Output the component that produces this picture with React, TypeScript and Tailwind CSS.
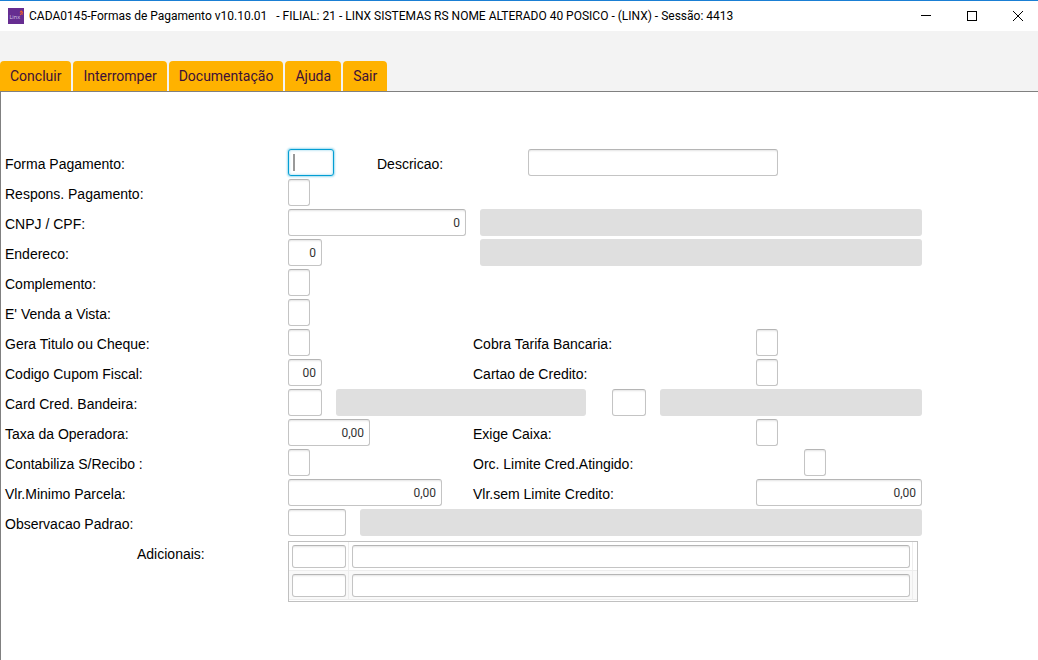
import React from "react";
import clsx from "clsx";

interface FieldProps {
    id: string;
    className: string;
    label?: string;
    value?: string;
}

interface LabelProps {
    htmlFor: string;
    className?: string;
    children: React.ReactNode;
}

const menuItems = ["Concluir", "Interromper", "Documentação", "Ajuda", "Sair"];

const Label: React.FC<LabelProps> = ({ htmlFor, className = "w-[283px]", children }) => (
    <label htmlFor={htmlFor} className={clsx("shrink-0 text-[14px] leading-[30px] text-black", className)}>
        {children}
    </label>
);

const Field: React.FC<FieldProps> = ({ id, className, label, value }) => (
    <input
        id={id}
        type="text"
        aria-label={label}
        defaultValue={value}
        className={clsx(
            "rounded-[3px] border border-[#c4c4c4] border-t-[#b5b5b5] bg-white px-[5px] text-right font-[Roboto,sans-serif] text-[12px] text-[#333333] shadow-[inset_0_2px_2px_-1px_#e4e4e4] outline-none",
            className
        )}
    />
);

// Read-only description shown next to a code
const Display: React.FC<{ label: string; className: string }> = ({ label, className }) => (
    <input
        type="text"
        readOnly
        aria-label={label}
        className={clsx("h-[27px] min-w-0 rounded-[3px] bg-[#dfdfdf] px-1 text-[12px] outline-none", className)}
    />
);

const Row: React.FC<{ children: React.ReactNode }> = ({ children }) => (
    <div className="flex h-[30px] items-start">{children}</div>
);

// Left part of a row that has a second label
const Half: React.FC<{ children: React.ReactNode }> = ({ children }) => (
    <div className="flex w-[185px] shrink-0">{children}</div>
);

const TitleBar: React.FC = () => (
    <header className="flex h-[31px] items-center border-t border-[#1a7fd4] bg-white pr-[15px] pl-2">
        <svg className="size-4 shrink-0" viewBox="0 0 16 16" aria-hidden="true">
            <rect width="16" height="16" fill="#662d91" />
            <text x="1.5" y="11" fontSize="5.5" fontFamily="Open Sans, sans-serif" fill="#d9c8e6">
                Linx
            </text>
            <path d="M12 4.5 13.2 3l1.3 1.2-.8 1 .9 1.3M12 6.8l1.2-1" stroke="#f0602a" strokeWidth="1.1" fill="none" />
        </svg>
        <h1 className="ml-[5px] flex-1 truncate font-[Roboto,sans-serif] text-[12px] leading-[18px] whitespace-pre text-black">
            {"CADA0145-Formas de Pagamento v10.10.01   - FILIAL: 21 - LINX SISTEMAS RS NOME ALTERADO 40 POSICO - (LINX) - Sessão: 4413"}
        </h1>
        <div className="flex gap-[36px]">
            <button type="button" aria-label="Minimizar">
                <svg className="size-[10px]" viewBox="0 0 10 10">
                    <path d="M0 4.5h10" stroke="#000" />
                </svg>
            </button>
            <button type="button" aria-label="Maximizar">
                <svg className="size-[10px]" viewBox="0 0 10 10">
                    <rect x="0.5" y="0.5" width="9" height="9" fill="none" stroke="#000" />
                </svg>
            </button>
            <button type="button" aria-label="Fechar">
                <svg className="size-[10px]" viewBox="0 0 10 10">
                    <path d="M0 0l10 10M10 0L0 10" stroke="#000" />
                </svg>
            </button>
        </div>
    </header>
);

const App: React.FC = () => {
    return (
        <div className="flex min-h-screen flex-col bg-[#f3f3f3] font-['Liberation_Sans',Arial,sans-serif]">
            <TitleBar />

            {/* Menu */}
            <nav className="flex gap-[2px] pt-[30px]">
                {menuItems.map((item) => (
                    <button
                        key={item}
                        type="button"
                        className="h-[30px] rounded-t-[4px] bg-[#ffb200] px-[10px] font-[Roboto,sans-serif] text-[14px] text-[#3d1038]"
                    >
                        {item}
                    </button>
                ))}
            </nav>

            <main className="flex-1 border-t border-l border-[#808080] bg-white pt-[57px] pl-1">
                <form className="max-w-[917px]">
                    <Row>
                        <Label htmlFor="forma">Forma Pagamento:</Label>
                        <div className="relative mr-[43px] flex">
                            <input
                                id="forma"
                                type="text"
                                className="h-[27px] w-[46px] rounded-[3px] border border-[#039ed3] bg-white px-1 text-[12px] caret-transparent shadow-[0_0_2px_1px_#9fdcf0,inset_0_0_2px_1px_#c8eaf6] outline-none"
                            />
                            <span className="pointer-events-none absolute top-[5px] left-[5px] h-[17px] w-[2px] bg-[#999999]" />
                        </div>
                        <Label htmlFor="descricao" className="w-[151px]">
                            Descricao:
                        </Label>
                        <Field id="descricao" className="h-[27px] w-[250px]" />
                    </Row>
                    <Row>
                        <Label htmlFor="respons">Respons. Pagamento:</Label>
                        <Field id="respons" className="h-[27px] w-[22px]" />
                    </Row>
                    <Row>
                        <Label htmlFor="cnpj">CNPJ / CPF:</Label>
                        <Field id="cnpj" className="mr-[14px] h-[27px] w-[178px]" value="0" />
                        <Display label="Nome" className="flex-1" />
                    </Row>
                    <Row>
                        <Label htmlFor="endereco">Endereco:</Label>
                        <Field id="endereco" className="mr-[158px] h-[27px] w-[34px]" value="0" />
                        <Display label="Descricao do endereco" className="flex-1" />
                    </Row>
                    <Row>
                        <Label htmlFor="complemento">Complemento:</Label>
                        <Field id="complemento" className="h-[27px] w-[22px]" />
                    </Row>
                    <Row>
                        <Label htmlFor="venda">E' Venda a Vista:</Label>
                        <Field id="venda" className="h-[27px] w-[22px]" />
                    </Row>
                    <Row>
                        <Label htmlFor="titulo">Gera Titulo ou Cheque:</Label>
                        <Half>
                            <Field id="titulo" className="h-[27px] w-[22px]" />
                        </Half>
                        <Label htmlFor="tarifa">Cobra Tarifa Bancaria:</Label>
                        <Field id="tarifa" className="h-[27px] w-[22px]" />
                    </Row>
                    <Row>
                        <Label htmlFor="cupom">Codigo Cupom Fiscal:</Label>
                        <Half>
                            <Field id="cupom" className="h-[27px] w-[34px]" value="00" />
                        </Half>
                        <Label htmlFor="cartao">Cartao de Credito:</Label>
                        <Field id="cartao" className="h-[27px] w-[22px]" />
                    </Row>
                    <Row>
                        <Label htmlFor="card">Card Cred. Bandeira:</Label>
                        <Field id="card" className="mr-[14px] h-[27px] w-[34px]" />
                        <Display label="Descricao do cartao" className="mr-[26px] w-[250px]" />
                        <Field id="bandeira" label="Bandeira" className="mr-[14px] h-[27px] w-[34px]" />
                        <Display label="Descricao da bandeira" className="flex-1" />
                    </Row>
                    <Row>
                        <Label htmlFor="taxa">Taxa da Operadora:</Label>
                        <Half>
                            <Field id="taxa" className="h-[27px] w-[82px]" value="0,00" />
                        </Half>
                        <Label htmlFor="caixa">Exige Caixa:</Label>
                        <Field id="caixa" className="h-[27px] w-[22px]" />
                    </Row>
                    <Row>
                        <Label htmlFor="recibo">Contabiliza S/Recibo :</Label>
                        <Half>
                            <Field id="recibo" className="h-[27px] w-[22px]" />
                        </Half>
                        <Label htmlFor="limite" className="w-[331px]">
                            Orc. Limite Cred.Atingido:
                        </Label>
                        <Field id="limite" className="h-[27px] w-[22px]" />
                    </Row>
                    <Row>
                        <Label htmlFor="minimo">Vlr.Minimo Parcela:</Label>
                        <Half>
                            <Field id="minimo" className="h-[27px] w-[154px]" value="0,00" />
                        </Half>
                        <Label htmlFor="semlimite">Vlr.sem Limite Credito:</Label>
                        <Field id="semlimite" className="h-[27px] w-[166px]" value="0,00" />
                    </Row>
                    <Row>
                        <Label htmlFor="observacao">Observacao Padrao:</Label>
                        <Field id="observacao" className="mr-[14px] h-[27px] w-[58px]" />
                        <Display label="Descricao da observacao" className="flex-1" />
                    </Row>

                    {/* Adicionais */}
                    <div className="flex items-start pr-1">
                        <Label htmlFor="codigo1" className="w-[283px] pl-[132px]">
                            Adicionais:
                        </Label>
                        <div className="mt-[2px] flex-1 border border-[#c0c0c0] pb-px">
                            <table className="w-full table-fixed border-separate border-spacing-0">
                                <colgroup>
                                    <col className="w-[60px]" />
                                    <col />
                                    <col className="w-[4px]" />
                                </colgroup>
                                <tbody>
                                    {[1, 2].map((n) => (
                                        <tr key={n} className="even:bg-[#f9f9f9]">
                                            <td className="border-r border-b border-[#ededed] pt-[3px] pr-[2px] pb-[2px] pl-[3px]">
                                                <Field
                                                    id={`codigo${n}`}
                                                    label={`Adicionais, codigo ${n}`}
                                                    className="block h-[23px] w-full"
                                                />
                                            </td>
                                            <td className="border-r border-b border-[#ededed] pt-[3px] pr-[2px] pb-[2px] pl-[3px]">
                                                <Field
                                                    id={`adicional${n}`}
                                                    label={`Adicionais, descricao ${n}`}
                                                    className="block h-[23px] w-full"
                                                />
                                            </td>
                                            <td className="border-b border-[#ededed] p-0" />
                                        </tr>
                                    ))}
                                </tbody>
                            </table>
                        </div>
                    </div>
                </form>
            </main>
        </div>
    );
};

export default App;
